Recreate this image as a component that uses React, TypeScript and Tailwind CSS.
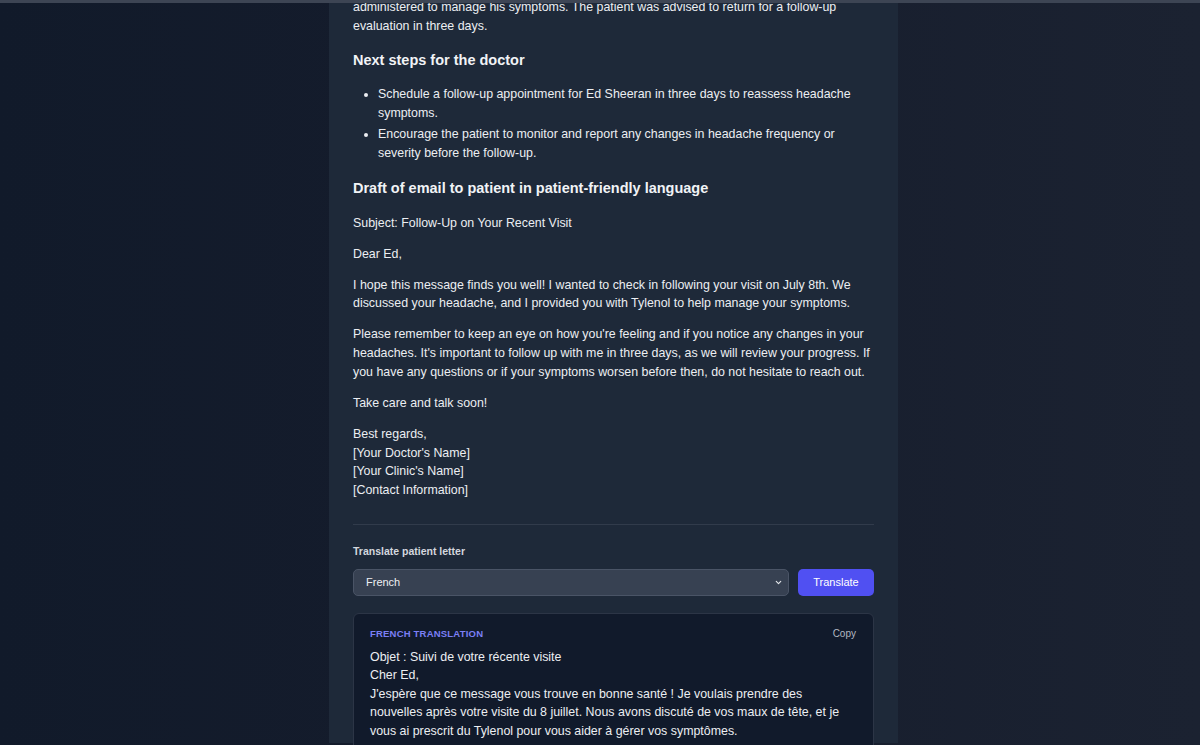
import { ChevronDown } from 'lucide-react';

const font = { fontFamily: '"Liberation Sans", Arial, sans-serif' };

export default function App() {
    return (
        <div
            className="relative h-[745px] w-full overflow-hidden bg-gradient-to-r from-[#111a2a] via-[#161d2d] to-[#1b2231]"
            style={font}
        >
            {/* header edge sticking out at the top */}
            <div className="absolute inset-x-0 top-0 z-10 h-[3px] bg-[#3d4554]" />

            <div className="ml-[329px] h-full w-[569px] bg-[#1e2939] px-6">
                <div className="-mt-[2px] text-[12.4px] leading-[18.7px] text-[#eceef2]">
                    <p>
                        administered to manage his symptoms. The patient was advised to return for a follow-up
                        evaluation in three days.
                    </p>

                    <h3 className="mt-[15px] mb-[15px] text-[14.5px] font-bold leading-[20px] text-[#f1f3f6]">
                        Next steps for the doctor
                    </h3>
                    <ul className="ml-[25px] list-disc space-y-[2.3px] marker:text-[#eceef2]">
                        <li>Schedule a follow-up appointment for Ed Sheeran in three days to reassess headache symptoms.</li>
                        <li>Encourage the patient to monitor and report any changes in headache frequency or severity before the follow-up.</li>
                    </ul>

                    <h3 className="mt-[15.6px] mb-[15.6px] text-[14.5px] font-bold leading-[20px] text-[#f1f3f6]">
                        Draft of email to patient in patient-friendly language
                    </h3>

                    {/* email draft */}
                    <div className="space-y-[12.3px]">
                        <p>Subject: Follow-Up on Your Recent Visit</p>
                        <p>Dear Ed,</p>
                        <p>
                            I hope this message finds you well! I wanted to check in following your visit on July 8th. We
                            discussed your headache, and I provided you with Tylenol to help manage your symptoms.
                        </p>
                        <p>
                            Please remember to keep an eye on how you're feeling and if you notice any changes in your
                            headaches. It's important to follow up with me in three days, as we will review your progress.
                            If you have any questions or if your symptoms worsen before then, do not hesitate to reach out.
                        </p>
                        <p>Take care and talk soon!</p>
                        <p>
                            Best regards,
                            <br />
                            [Your Doctor's Name]
                            <br />
                            [Your Clinic's Name]
                            <br />
                            [Contact Information]
                        </p>
                    </div>
                </div>

                <div className="mt-[24px] border-t border-[#313b4b]" />

                {/* translation controls */}
                <div className="pt-[19px]">
                    <label className="block text-[10.5px] font-bold leading-[14px] text-[#d3d7de]">
                        Translate patient letter
                    </label>
                    <div className="mt-[11px] flex gap-[9px]">
                        <div className="relative flex-1">
                            <select className="h-[27px] w-full appearance-none rounded-[5px] border border-[#4a5466] bg-[#374152] pl-[12px] text-[11px] text-[#eef0f3] outline-none">
                                <option>French</option>
                            </select>
                            <ChevronDown
                                className="pointer-events-none absolute right-[6px] top-[9px] h-[9px] w-[9px] text-[#e5e7eb]"
                                strokeWidth={3}
                            />
                        </div>
                        <button className="h-[27px] w-[76px] rounded-[5px] bg-[#5050f2] text-[11px] font-medium text-white">
                            Translate
                        </button>
                    </div>

                    <div className="mt-[17px] rounded-[6px] border border-[#2c3546] bg-[#111a2b] pl-4 pr-[17px] pt-[13px] pb-4">
                        <div className="flex items-center justify-between leading-[13px]">
                            <span className="text-[9.5px] font-bold uppercase tracking-[0.2px] text-[#7b7ff5]">
                                French translation
                            </span>
                            <button className="text-[10px] text-[#b2b8c2]">Copy</button>
                        </div>
                        <p className="mt-[8px] pr-[4px] text-[12.4px] leading-[18.6px] text-[#eceef2]">
                            Objet : Suivi de votre récente visite
                            <br />
                            Cher Ed,
                            <br />
                            J'espère que ce message vous trouve en bonne santé ! Je voulais prendre des nouvelles après
                            votre visite du 8 juillet. Nous avons discuté de vos maux de tête, et je vous ai prescrit du
                            Tylenol pour vous aider à gérer vos symptômes.
                        </p>
                    </div>
                </div>
            </div>
        </div>
    );
}
